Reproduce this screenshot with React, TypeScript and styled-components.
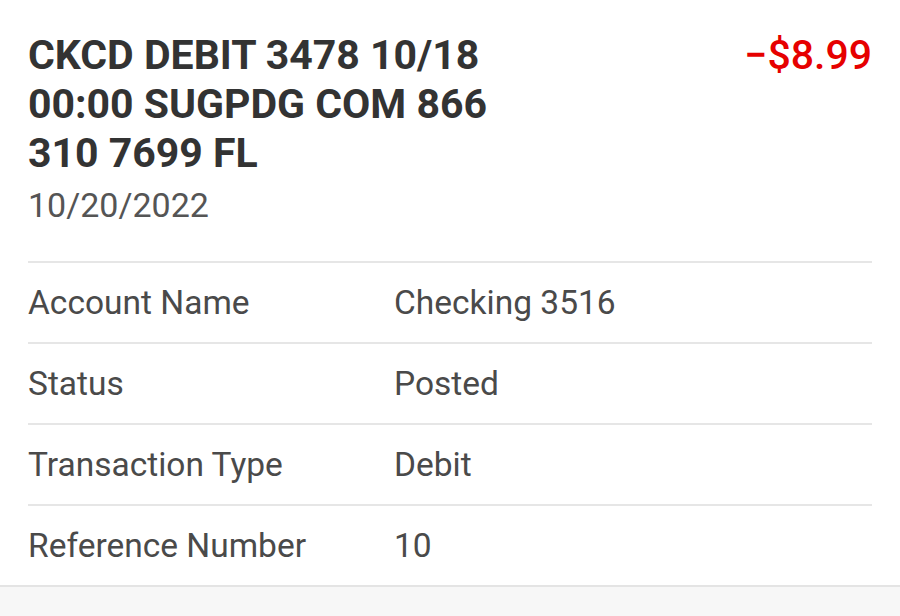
import React from "react";
import styled, { createGlobalStyle } from "styled-components";

const Global = createGlobalStyle`
  html, body { margin: 0; padding: 0; background: #f7f7f7; }
  body { font-family: Roboto, "Noto Sans", Arial, sans-serif; }
`;

const Card = styled.div`
  background: #ffffff;
  border-bottom: 2px solid #e4e4e4;
  padding: 0 28px;
`;

const Header = styled.div`
  display: flex;
  justify-content: space-between;
  align-items: flex-start;
  padding: 31px 0 36px;
  border-bottom: 2px solid #e6e6e6;
`;

const TitleBlock = styled.div`
  display: flex;
  flex-direction: column;
`;

const Title = styled.div`
  max-width: 520px;
  font-size: 41px;
  line-height: 49px;
  font-weight: 700;
  color: #333333;
`;

const DateText = styled.div`
  margin-top: 7px;
  font-size: 34px;
  line-height: 40px;
  color: #555555;
`;

const Amount = styled.div`
  font-size: 41px;
  line-height: 49px;
  font-weight: 500;
  color: #e60000;
`;

const Row = styled.div<{ $last?: boolean }>`
  display: grid;
  grid-template-columns: 366px 1fr;
  align-items: center;
  height: 79px;
  line-height: 1.2;
  border-bottom: ${(p) => (p.$last ? "none" : "2px solid #e6e6e6")};
  font-size: 33.5px;
  color: #4a4a4a;
`;

const Label = styled.div`
  padding-top: 2px;
`;
const Value = styled.div`
  padding-top: 2px;
`;

const rows = [
  ["Account Name", "Checking 3516"],
  ["Status", "Posted"],
  ["Transaction Type", "Debit"],
  ["Reference Number", "10"],
];

export default function App() {
  return (
    <>
      <Global />
      <Card>
        <Header>
          <TitleBlock>
            <Title>CKCD DEBIT 3478 10/18 00:00 SUGPDG COM 866 310 7699 FL</Title>
            <DateText>10/20/2022</DateText>
          </TitleBlock>
          <Amount>−$8.99</Amount>
        </Header>
        {rows.map(([l, v], i) => (
          <Row key={l} $last={i === rows.length - 1}>
            <Label>{l}</Label>
            <Value>{v}</Value>
          </Row>
        ))}
      </Card>
    </>
  );
}
